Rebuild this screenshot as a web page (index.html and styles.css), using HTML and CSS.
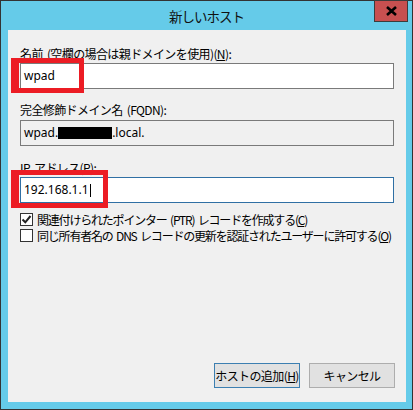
FILE: index.html
```html
<!DOCTYPE html>
<html lang="ja">
<head>
<meta charset="utf-8">
<link rel="stylesheet" href="styles.css">
</head>
<body>
<div class="window">
  <div class="titlebar">
    <span class="title">新しいホスト</span>
    <div class="close"><svg width="13" height="10" viewBox="0 0 13 10"><path d="M2 1 L11 9 M11 1 L2 9" stroke="#000" stroke-width="2.6"/></svg></div>
  </div>
  <div class="client">
    <div class="label l1">名前 (空欄の場合は親ドメインを使用)(<u>N</u>):</div>
    <div class="field-wrap">
      <div class="input">wpad</div>
      <div class="mark mark1"></div>
    </div>
    <div class="label l2">完全修飾ドメイン名 (FQDN):</div>
    <div class="input readonly">wpad.<span class="redact"></span>.local.</div>
    <div class="label l3">IP アドレス(<u>P</u>):</div>
    <div class="field-wrap">
      <div class="input focus">192.168.1.1<span class="caret"></span></div>
      <div class="mark mark2"></div>
    </div>
    <div class="check c1"><span class="box"><svg width="11" height="11" viewBox="0 0 11 11"><path d="M1.5 5.5 L4.3 8.3 L9.5 2" fill="none" stroke="#222" stroke-width="2"/></svg></span><span>関連付けられたポインター (PTR) レコードを作成する(<u>C</u>)</span></div>
    <div class="check c2"><span class="box"></span><span>同じ所有者名の DNS レコードの更新を認証されたユーザーに許可する(<u>O</u>)</span></div>
    <div class="spacer"></div>
    <div class="buttons">
      <div class="btn default">ホストの追加(<u>H</u>)</div>
      <div class="btn">キャンセル</div>
    </div>
  </div>
</div>
</body>
</html>
```
FILE: styles.css
```css
html, body {
  margin: 0;
  padding: 0;
  background: #3a3a3a;
}
body {
  font-family: "Noto Sans CJK JP", "Noto Sans", sans-serif;
  font-size: 12px;
  color: #000;
}
.window {
  width: 411px;
  height: 408px;
  border: 1px solid #333;
  background: #65cbe9;
  display: flex;
  flex-direction: column;
}
.titlebar {
  position: relative;
  height: 29px;
  display: flex;
  align-items: center;
  justify-content: center;
}
.title {
  font-size: 13.5px;
  letter-spacing: -1px;
  color: #111;
}
.close {
  position: absolute;
  top: -1px;
  right: 4px;
  width: 32px;
  height: 20px;
  background: #c75050;
  border: 1px solid #3c3c3c;
  display: flex;
  align-items: center;
  justify-content: center;
}
.client {
  margin: 0 6px 0 7px;
  height: 372px;
  background: #f0f0f0;
  display: flex;
  flex-direction: column;
  padding: 0 12px 0 12px;
  box-sizing: border-box;
}
.label {
  height: 15px;
  line-height: 15px;
  white-space: nowrap;
  letter-spacing: -0.6px;
  word-spacing: 2px;
}
.l1 { margin-top: 16px; }
.l2 { margin-top: 13px; }
.l3 { margin-top: 14px; }
.field-wrap {
  position: relative;
}
.input {
  height: 26px;
  box-sizing: border-box;
  border: 1px solid #7a7a7a;
  background: #fff;
  margin-top: 2px;
  padding-left: 3px;
  line-height: 24px;
  font-family: "Noto Sans", "Noto Sans CJK JP", sans-serif;
  display: flex;
  align-items: center;
}
.input.readonly {
  background: #f0f0f0;
  margin-top: 3px;
}
.input.focus {
  border-color: #2f6fa4;
}
.redact {
  display: inline-block;
  width: 54px;
  height: 12px;
  background: #000;
}
.caret {
  display: inline-block;
  width: 1px;
  height: 13px;
  background: #000;
  margin-left: 1px;
}
.mark {
  position: absolute;
  border: 5px solid #ec1c24;
  border-left-width: 8px;
  box-sizing: border-box;
  pointer-events: none;
}
.mark1 {
  left: -9px;
  top: -3px;
  width: 73px;
  height: 35px;
}
.mark2 {
  left: -9px;
  top: -5px;
  width: 97px;
  height: 38px;
}
.check {
  display: flex;
  align-items: center;
  gap: 4px;
  height: 16px;
  white-space: nowrap;
  letter-spacing: -1.2px;
  word-spacing: 2px;
}
.c1 { margin-top: 8px; }
.c2 { margin-top: 0px; }
.box {
  width: 13px;
  height: 13px;
  box-sizing: border-box;
  border: 1px solid #333;
  background: #fff;
  display: flex;
  align-items: center;
  justify-content: center;
  flex: none;
}
.spacer { flex: 1; }
.buttons {
  display: flex;
  justify-content: flex-end;
  gap: 9px;
  margin-right: -1px;
  margin-bottom: 14px;
}
.btn {
  width: 86px;
  height: 25px;
  box-sizing: border-box;
  border: 1px solid #adadad;
  background: #e1e1e1;
  display: flex;
  align-items: center;
  justify-content: center;
  white-space: nowrap;
  letter-spacing: -0.6px;
}
.btn.default {
  border-color: #3c7fb1;
}
u { text-decoration: underline; text-underline-offset: 1px; }
```
